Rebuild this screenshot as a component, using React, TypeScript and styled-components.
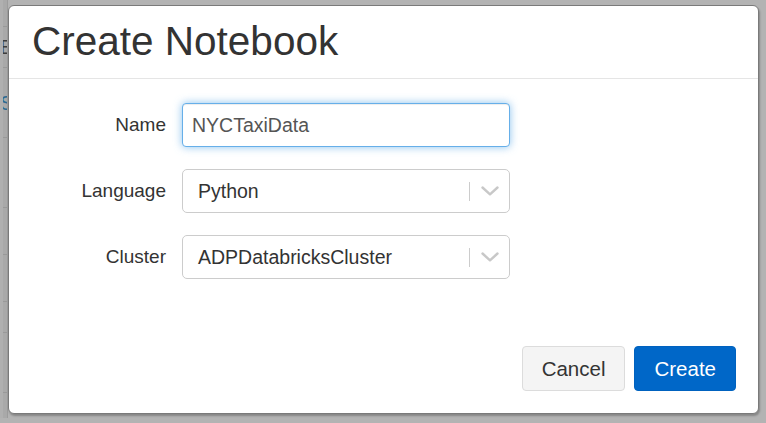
import React from "react";
import styled, { createGlobalStyle } from "styled-components";

const Global = createGlobalStyle`
  html, body { margin: 0; padding: 0; }
  body {
    background: #b3b3b3;
    font-family: "Liberation Sans", Arial, sans-serif;
    width: 766px;
    height: 423px;
    overflow: hidden;
  }
`;

const Page = styled.div`
  display: flex;
  align-items: flex-start;
  width: 766px;
  height: 423px;
  box-sizing: border-box;
  padding-top: 5px;
`;

const Strip = styled.div`
  width: 8px;
  height: 418px;
  margin-top: -5px;
  flex-shrink: 0;
  background: #a9a9a9;
  border-left: 3px solid #b0b0b0;
  border-right: 1px solid #9c9c9c;
  box-sizing: border-box;
  display: flex;
  flex-direction: column;
  overflow: hidden;
`;

const StripCell = styled.div<{ $h: number }>`
  height: ${(p) => p.$h}px;
  flex-shrink: 0;
  border-bottom: 1px solid #999;
  box-sizing: border-box;
  font-size: 20px;
  line-height: ${(p) => p.$h}px;
  white-space: nowrap;
`;

const StripLetter = styled.span<{ $c: string }>`
  color: ${(p) => p.$c};
  margin-left: -3px;
`;

const Dialog = styled.div`
  width: 751px;
  height: 409px;
  box-sizing: border-box;
  background: #fff;
  border: 1px solid #7a7a7a;
  border-radius: 6px;
  box-shadow: 1px 2px 2px rgba(0, 0, 0, 0.25);
  display: flex;
  flex-direction: column;
  flex-shrink: 0;
`;

const Header = styled.div`
  height: 73px;
  box-sizing: border-box;
  padding: 13px 23px 0;
  border-bottom: 1px solid #e5e5e5;
`;

const Title = styled.h1`
  margin: 0;
  font-size: 40.5px;
  font-weight: 400;
  line-height: 44px;
  color: #333;
`;

const Body = styled.div`
  flex: 1;
  padding-top: 24px;
  display: grid;
  grid-template-columns: 157px 328px;
  column-gap: 16px;
  row-gap: 22px;
  align-content: start;
`;

const Label = styled.label`
  height: 44px;
  display: flex;
  align-items: center;
  justify-content: flex-end;
  font-size: 19px;
  color: #333;
`;

const TextInput = styled.input`
  height: 44px;
  box-sizing: border-box;
  width: 100%;
  padding: 0 9px;
  margin: 0;
  font-family: "Liberation Sans", Arial, sans-serif;
  font-size: 19.5px;
  color: #555;
  border: 1px solid #66afe9;
  border-radius: 4px;
  outline: none;
  box-shadow: inset 0 1px 1px rgba(0, 0, 0, 0.075), 0 0 9px rgba(102, 175, 233, 0.75);
`;

const Select = styled.div`
  height: 44px;
  box-sizing: border-box;
  border: 1px solid #cccccc;
  border-radius: 5px;
  display: flex;
  align-items: center;
  padding-left: 15px;
`;

const SelectValue = styled.span`
  flex: 1;
  font-size: 19.5px;
  color: #333;
`;

const Separator = styled.span`
  width: 1.5px;
  height: 19px;
  background: #cccccc;
`;

const Indicator = styled.span`
  width: 39px;
  display: flex;
  justify-content: center;
  align-items: center;
`;

const Footer = styled.div`
  display: flex;
  justify-content: flex-end;
  gap: 9px;
  padding: 0 22px 22px;
`;

const Button = styled.button<{ $primary?: boolean }>`
  height: 45px;
  padding: 0 19px;
  font-family: "Liberation Sans", Arial, sans-serif;
  font-size: 20.5px;
  border-radius: 4px;
  cursor: pointer;
  color: ${(p) => (p.$primary ? "#fff" : "#333")};
  background: ${(p) => (p.$primary ? "#0067c8" : "#f4f4f4")};
  border: 1px solid ${(p) => (p.$primary ? "#0062bf" : "#dcdcdc")};
`;

const Chevron = () => (
  <svg width="18" height="10" viewBox="0 0 18 10">
    <polyline
      points="1.5,1.5 9,8.3 16.5,1.5"
      fill="none"
      stroke="#c8c8c8"
      strokeWidth="2.4"
      strokeLinecap="round"
      strokeLinejoin="round"
    />
  </svg>
);

const SelectBox = ({ value }: { value: string }) => (
  <Select>
    <SelectValue>{value}</SelectValue>
    <Separator />
    <Indicator>
      <Chevron />
    </Indicator>
  </Select>
);

export default function App() {
  return (
    <>
      <Global />
      <Page>
        <Strip>
          <StripCell $h={27} />
          <StripCell $h={41}>
            <StripLetter $c="#3d3d3d">E</StripLetter>
          </StripCell>
          <StripCell $h={70}>
            <StripLetter $c="#2e6b93">S</StripLetter>
          </StripCell>
          <StripCell $h={70} />
          <StripCell $h={47} />
          <StripCell $h={47} />
          <StripCell $h={31} />
          <StripCell $h={60} />
        </Strip>
        <Dialog>
          <Header>
            <Title>Create Notebook</Title>
          </Header>
          <Body>
            <Label>Name</Label>
            <TextInput defaultValue="NYCTaxiData" />
            <Label>Language</Label>
            <SelectBox value="Python" />
            <Label>Cluster</Label>
            <SelectBox value="ADPDatabricksCluster" />
          </Body>
          <Footer>
            <Button>Cancel</Button>
            <Button $primary>Create</Button>
          </Footer>
        </Dialog>
      </Page>
    </>
  );
}
